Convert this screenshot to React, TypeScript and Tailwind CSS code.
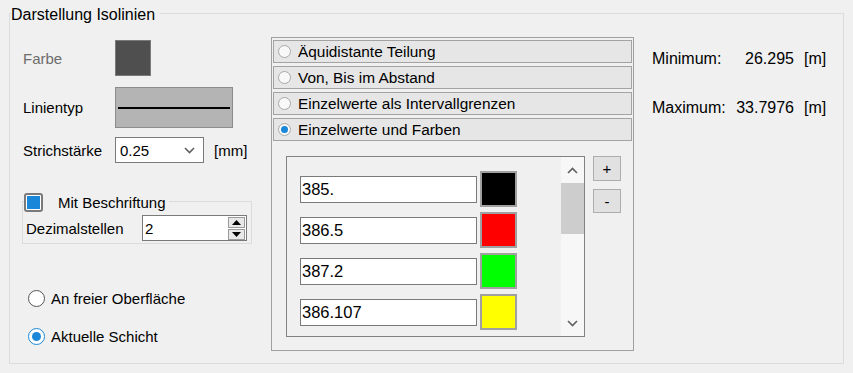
import React from "react";

/* ---------- small controls ---------- */

function Chevron({ dir, className = "" }: { dir: "up" | "down"; className?: string }) {
  return (
    <svg width="11" height="7" viewBox="0 0 11 7" className={className}>
      <polyline
        points={dir === "down" ? "1,1 5.5,5.5 10,1" : "1,6 5.5,1.5 10,6"}
        fill="none"
        stroke="currentColor"
        strokeWidth="1.6"
      />
    </svg>
  );
}

function Radio({ checked, small = false }: { checked?: boolean; small?: boolean }) {
  if (small) {
    return (
      <span className="flex h-[13px] w-[13px] items-center justify-center rounded-full border border-[#a8a8a8] bg-[#f8f8f8]">
        {checked && <span className="h-[7px] w-[7px] rounded-full bg-[#1a87d8]" />}
      </span>
    );
  }
  return (
    <span
      className={`flex h-[17px] w-[17px] items-center justify-center rounded-full border bg-white ${
        checked ? "border-[#1a87d8]" : "border-[#555]"
      }`}
    >
      {checked && <span className="h-[9px] w-[9px] rounded-full bg-[#1a87d8]" />}
    </span>
  );
}

/* ---------- data ---------- */

const MODES = [
  { label: "Äquidistante Teilung", on: false },
  { label: "Von, Bis im Abstand", on: false },
  { label: "Einzelwerte als Intervallgrenzen", on: false },
  { label: "Einzelwerte und Farben", on: true },
];

const VALUES = [
  { v: "385.", c: "bg-[#000000]" },
  { v: "386.5", c: "bg-[#ff0000]" },
  { v: "387.2", c: "bg-[#00ff00]" },
  { v: "386.107", c: "bg-[#ffff00]" },
];

export default function App() {
  return (
    <div
      className="h-[373px] w-[853px] overflow-hidden bg-[#f0f0f0] pt-[13px] pl-[9px] text-[15px] leading-[17px] text-black"
      style={{ fontFamily: '"Liberation Sans", Arial, sans-serif' }}
    >
      <div className="relative flex h-[351px] w-[835px] border border-[#dcdcdc] pl-[13px]">
        <span className="absolute -top-[8px] left-[1px] bg-[#f0f0f0] pr-[5px] text-[16px] leading-[18px]">
          Darstellung Isolinien
        </span>

        {/* ---------- left column ---------- */}
        <div className="flex w-[248px] flex-col pt-[26px]">
          <div className="flex h-[36px] items-center">
            <span className="w-[92px] text-[#6d6d6d]">Farbe</span>
            <span className="h-[36px] w-[36px] border border-[#7a7a7a] bg-[#4f4f4f]" />
          </div>

          <div className="mt-[11px] flex h-[41px] items-center">
            <span className="w-[92px]">Linientyp</span>
            <span className="flex h-[41px] w-[118px] items-center border border-[#8c8c8c] bg-[#b4b4b4] px-[2px]">
              <span className="h-[2px] w-full bg-black" />
            </span>
          </div>

          <div className="mt-[9px] flex h-[26px] items-center">
            <span className="w-[92px]">Strichstärke</span>
            <span className="flex h-[26px] w-[89px] items-center justify-between border border-[#7a7a7a] bg-white pl-[4px] pr-[8px]">
              <span>0.25</span>
              <Chevron dir="down" className="text-[#606060]" />
            </span>
            <span className="ml-[10px]">[mm]</span>
          </div>

          <div className="relative mt-[38px] -ml-[1px] h-[43px] w-[230px] border border-[#dcdcdc]">
            <div className="absolute -top-[9px] left-[1px] flex items-center bg-[#f0f0f0] pr-[3px]">
              <span className="flex h-[19px] w-[19px] items-center justify-center rounded-[3px] border-2 border-[#7a7a7a] bg-white">
                <span className="h-[13px] w-[13px] bg-[#1a87d8]" />
              </span>
              <span className="ml-[15px]">Mit Beschriftung</span>
            </div>
            <div className="mt-[13px] flex h-[26px] items-center">
              <span className="w-[119px] pl-[3px]">Dezimalstellen</span>
              <span className="flex h-[26px] w-[105px] items-center justify-between border border-[#7a7a7a] bg-white pl-[2px]">
                <span>2</span>
                <span className="mr-[1px] flex flex-col gap-[1px]">
                  <span className="flex h-[11px] w-[17px] items-center justify-center border border-[#9a9a9a] bg-[#e8e8e8]">
                    <svg width="9" height="5" viewBox="0 0 9 5">
                      <polygon points="0,5 4.5,0 9,5" fill="#000" />
                    </svg>
                  </span>
                  <span className="flex h-[11px] w-[17px] items-center justify-center border border-[#9a9a9a] bg-[#e8e8e8]">
                    <svg width="9" height="5" viewBox="0 0 9 5">
                      <polygon points="0,0 4.5,5 9,0" fill="#000" />
                    </svg>
                  </span>
                </span>
              </span>
            </div>
          </div>

          <div className="mt-[44px] flex h-[20px] items-center pl-[5px]">
            <Radio />
            <span className="ml-[6px]">An freier Oberfläche</span>
          </div>
          <div className="mt-[18px] flex h-[20px] items-center pl-[5px]">
            <Radio checked />
            <span className="ml-[6px]">Aktuelle Schicht</span>
          </div>
        </div>

        {/* ---------- mode panel ---------- */}
        <div className="mt-[23px] flex h-[314px] w-[363px] flex-col border border-[#a0a0a0] px-[1px] pt-[2px]">
          <div className="flex flex-col gap-[3px]">
            {MODES.map((m) => (
              <div
                key={m.label}
                className="flex h-[23px] items-center border border-[#a3a3a3] bg-[#e6e6e6] pl-[4px]"
              >
                <Radio small checked={m.on} />
                <span className="ml-[7px] text-[15.4px]">{m.label}</span>
              </div>
            ))}
          </div>

          <div className="mt-[15px] ml-[13px] flex">
            <div className="flex h-[181px] w-[299px] border border-[#828282]">
              <div className="flex flex-1 flex-col gap-[5px] pt-[14px] pl-[13px]">
                {VALUES.map((r) => (
                  <div key={r.v} className="flex h-[36px] items-center">
                    <span className="flex h-[27px] w-[177px] items-center border border-[#7a7a7a] bg-white pl-[1px] text-[16.5px]">
                      {r.v}
                    </span>
                    <span className={`ml-[3px] h-[36px] w-[37px] border-2 border-[#a0a0a0] ${r.c}`} />
                  </div>
                ))}
              </div>
              <div className="flex w-[23px] flex-col items-center bg-[#f7f7f7] text-[#606060]">
                <div className="flex h-[26px] items-center justify-center">
                  <Chevron dir="up" />
                </div>
                <div className="h-[51px] w-full bg-[#cdcdcd]" />
                <div className="flex-1" />
                <div className="flex h-[26px] items-center justify-center">
                  <Chevron dir="down" />
                </div>
              </div>
            </div>
            <div className="ml-[8px] flex flex-col gap-[8px]">
              <span className="flex h-[25px] w-[28px] items-center justify-center border border-[#adadad] bg-[#e1e1e1]">
                +
              </span>
              <span className="flex h-[24px] w-[28px] items-center justify-center border border-[#adadad] bg-[#e1e1e1]">
                -
              </span>
            </div>
          </div>
        </div>

        {/* ---------- min / max ---------- */}
        <div className="flex flex-col pt-[36px] pl-[18px] text-[16px] leading-[18px]">
          <div className="flex">
            <span className="w-[84px]">Minimum:</span>
            <span className="w-[58px] text-right">26.295</span>
            <span className="ml-[10px]">[m]</span>
          </div>
          <div className="mt-[31px] flex">
            <span className="w-[84px]">Maximum:</span>
            <span className="w-[58px] text-right">33.7976</span>
            <span className="ml-[10px]">[m]</span>
          </div>
        </div>
      </div>
    </div>
  );
}
